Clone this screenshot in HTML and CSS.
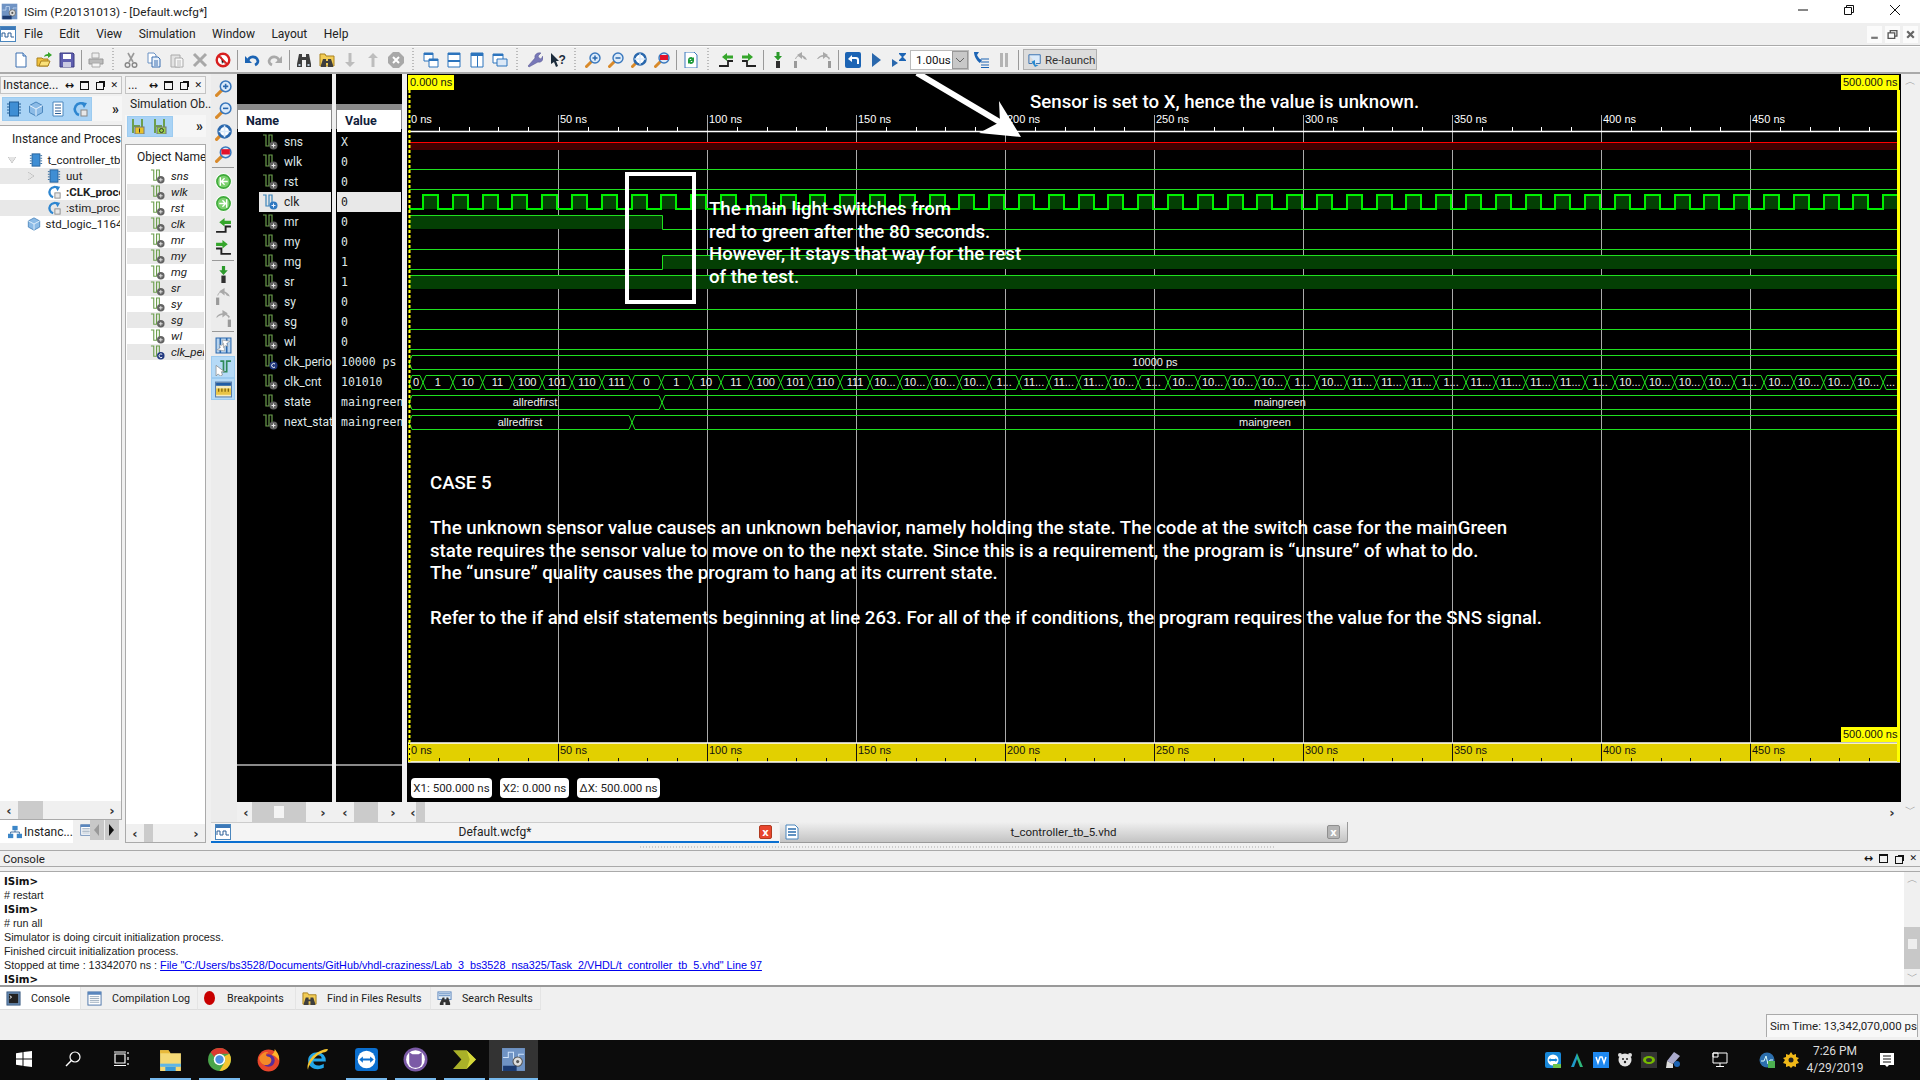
FILE: index.html
```html
<!DOCTYPE html>
<html lang="en">
<head>
<meta charset="utf-8">
<title>ISim (P.20131013) - [Default.wcfg*]</title>
<link rel="stylesheet" href="styles.css">
</head>
<body>
<svg class="defs" width="0" height="0">
  <defs>
    <symbol id="i-new" viewBox="0 0 16 16"><path d="M3 1h7l3 3v11H3z" fill="#fff" stroke="#3a6fb0"/><path d="M10 1v3h3" fill="#cfe0f4" stroke="#3a6fb0"/></symbol>
    <symbol id="i-open" viewBox="0 0 16 16"><path d="M1 6h5l1 1h5v7H1z" fill="#f2c23c" stroke="#a8801e"/><path d="M3 14l2-5h9l-2 5z" fill="#fbe27a" stroke="#a8801e"/><path d="M8 5c0-2 2-3 4-3V0l4 3-4 3V4c-2 0-3 0-4 1z" fill="#3aa52c"/></symbol>
    <symbol id="i-save" viewBox="0 0 16 16"><path d="M1 1h13l1 1v13H1z" fill="#5f5fb0" stroke="#3c3c80"/><rect x="4" y="2" width="8" height="5" fill="#fff"/><rect x="4" y="10" width="8" height="5" fill="#c9c9e2"/></symbol>
    <symbol id="i-print" viewBox="0 0 16 16"><path d="M4 1h7v5H4z" fill="#eee" stroke="#aaa"/><path d="M1 7h14v5H1z" fill="#bbb" stroke="#999"/><path d="M4 11h8v4H4z" fill="#f4f4f4" stroke="#aaa"/></symbol>
    <symbol id="i-cut" viewBox="0 0 16 16"><path d="M5 1l5 9M11 1L6 10" stroke="#999" stroke-width="1.6" fill="none"/><circle cx="4.5" cy="13" r="2.3" fill="none" stroke="#888" stroke-width="1.4"/><circle cx="11.5" cy="13" r="2.3" fill="none" stroke="#888" stroke-width="1.4"/></symbol>
    <symbol id="i-copy" viewBox="0 0 16 16"><path d="M2 1h6l2 2v8H2z" fill="#fff" stroke="#6b92c4"/><path d="M6 5h6l2 2v8H6z" fill="#eaf2fb" stroke="#3a6fb0"/><path d="M8 9h4M8 11h4M8 13h4" stroke="#3a6fb0"/></symbol>
    <symbol id="i-paste" viewBox="0 0 16 16"><path d="M2 3h9v12H2z" fill="#e3e3e3" stroke="#aaa"/><path d="M6 6h7l1 1v8H6z" fill="#f7f7f7" stroke="#aaa"/><path d="M8 9h4M8 11h4M8 13h4" stroke="#bbb"/></symbol>
    <symbol id="i-del" viewBox="0 0 16 16"><path d="M2 2l12 12M14 2L2 14" stroke="#a8a8a8" stroke-width="3"/></symbol>
    <symbol id="i-stop" viewBox="0 0 16 16"><circle cx="8" cy="8" r="6.3" fill="#fff" stroke="#d81f1f" stroke-width="2.4"/><path d="M6 4l4 8-2-2-1 2z" fill="#111"/><path d="M3.6 3.6l8.8 8.8" stroke="#d81f1f" stroke-width="2"/></symbol>
    <symbol id="i-undo" viewBox="0 0 16 16"><path d="M4 9c1-5 8-6 10 0 0 2-1 3-3 4" fill="none" stroke="#1c64b4" stroke-width="2.6"/><path d="M1 4v7h7z" fill="#1c64b4"/></symbol>
    <symbol id="i-redo" viewBox="0 0 16 16"><path d="M12 9C11 4 4 3 2 9c0 2 1 3 3 4" fill="none" stroke="#a9a9a9" stroke-width="2.6"/><path d="M15 4v7H8z" fill="#a9a9a9"/></symbol>
    <symbol id="i-bino" viewBox="0 0 16 16"><path d="M3 2h3v3h4V2h3l2 10v3H10V8H6v7H1v-3z" fill="#3e3e3e"/><path d="M2.5 12h2v2h-2zM11.500 12h2v2h-2z" fill="#bcd"/></symbol>
    <symbol id="i-findf" viewBox="0 0 16 16"><path d="M1 2h5l1 2h8v10H1z" fill="#f2cc55" stroke="#a8801e"/><path d="M4 7h3v2h2V7h3l2 6v2H9v-4H7v4H2v-2z" fill="#3e3e3e"/></symbol>
    <symbol id="i-down" viewBox="0 0 16 16"><path d="M6.500 1h3v9H13l-5 5-5-5h3.500z" fill="#bdbdbd"/></symbol>
    <symbol id="i-up" viewBox="0 0 16 16"><path d="M6.500 15h3V6H13L8 1 3 6h3.500z" fill="#bdbdbd"/></symbol>
    <symbol id="i-xc" viewBox="0 0 16 16"><path d="M5 0h6l5 5v6l-5 5H5l-5-5V5z" fill="#a8a8a8"/><path d="M5 5l6 6M11 5l-6 6" stroke="#fff" stroke-width="2"/></symbol>
    <symbol id="i-w1" viewBox="0 0 16 16"><path d="M1 1h9v8H1z" fill="#fff" stroke="#2c74bd"/><path d="M1 1h9v2H1z" fill="#2c74bd"/><path d="M6 7h9v8H6z" fill="#fff" stroke="#2c74bd"/><path d="M6 7h9v2H6z" fill="#2c74bd"/></symbol>
    <symbol id="i-w2" viewBox="0 0 16 16"><path d="M2 1h12v14H2z" fill="#fff" stroke="#2c74bd"/><path d="M2 1h12v2H2zM2 8h12v2H2z" fill="#2c74bd"/></symbol>
    <symbol id="i-w3" viewBox="0 0 16 16"><path d="M2 1h12v14H2z" fill="#fff" stroke="#2c74bd"/><path d="M2 1h12v3H2zM8 4h1v11H8z" fill="#2c74bd"/></symbol>
    <symbol id="i-w4" viewBox="0 0 16 16"><path d="M1 2h10v9H1z" fill="#fff" stroke="#2c74bd"/><path d="M1 2h10v2H1z" fill="#2c74bd"/><path d="M5 7h10v7H5z" fill="#dce9f7" stroke="#2c74bd"/></symbol>
    <symbol id="i-wrench" viewBox="0 0 16 16"><path d="M2 15l-1-1 7-8c-1-3 2-6 6-5l-3 3 1 2 2 1 2-3c1 4-2 7-5 6z" fill="#7878b8" stroke="#54548f" stroke-width=".5"/></symbol>
    <symbol id="i-help" viewBox="0 0 16 16"><path d="M1 1v11l3-2 2 5 2-1-2-5h3z" fill="#1c2c3c"/><text x="8.500" y="12" class="q">?</text></symbol>
    <symbol id="i-zi" viewBox="0 0 16 16"><path d="M1.500 14.500l5-5" stroke="#d98a2a" stroke-width="3" stroke-linecap="round"/><circle cx="10" cy="6" r="5" fill="#dcebfa" stroke="#3a78bd" stroke-width="1.400"/><path d="M7.500 6h5M10 3.500v5" stroke="#2a68ad" stroke-width="1.500"/></symbol>
    <symbol id="i-zo" viewBox="0 0 16 16"><path d="M1.500 14.500l5-5" stroke="#d98a2a" stroke-width="3" stroke-linecap="round"/><circle cx="10" cy="6" r="5" fill="#dcebfa" stroke="#3a78bd" stroke-width="1.400"/><path d="M7.500 6h5" stroke="#2a68ad" stroke-width="1.500"/></symbol>
    <symbol id="i-zf" viewBox="0 0 16 16"><path d="M1.500 14.500l3-3" stroke="#d98a2a" stroke-width="3" stroke-linecap="round"/><circle cx="9" cy="7" r="5.500" fill="#fff" stroke="#2a68ad" stroke-width="2.600"/><path d="M9 1.500v11M3.500 7h11" stroke="#dcebfa" stroke-width="1.500"/></symbol>
    <symbol id="i-zr" viewBox="0 0 16 16"><path d="M1.500 14.500l5-5" stroke="#d98a2a" stroke-width="3" stroke-linecap="round"/><circle cx="10" cy="6" r="5" fill="#dcebfa" stroke="#3a78bd" stroke-width="1.400"/><rect x="6" y="3" width="8" height="5" fill="#e3122a"/></symbol>
    <symbol id="i-rdoc" viewBox="0 0 16 16"><path d="M2 0h9l3 3v13H2z" fill="#fff" stroke="#3a78bd"/><path d="M5 8c0-3 4-4 5-2l1-1v4H7l1.500-1.500C7.500 6.500 6.500 7 6.500 8.500zM11 9c0 3-4 4-5 2l-1 1V8h4l-1.500 1.500c1 1 2 .5 2-1z" fill="#1f9a3a"/></symbol>
    <symbol id="i-sl" viewBox="0 0 16 16"><path d="M1 14h9V9h5" fill="none" stroke="#222" stroke-width="1.800"/><path d="M4 5l5-4v2.500h6v3H9V9z" fill="#35a62b"/></symbol>
    <symbol id="i-sr" viewBox="0 0 16 16"><path d="M1 14h9V9h5" fill="none" stroke="#222" stroke-width="1.800" transform="translate(16 0) scale(-1 1)"/><path d="M12 5L7 1v2.500H1v3h6V9z" fill="#35a62b"/></symbol>
    <symbol id="i-stepin" viewBox="0 0 16 16"><path d="M6.500 0h3v4H12L8 8.500 4 4h2.500z" fill="#2b9a2b"/><rect x="6" y="9" width="4" height="7" fill="#2f2f2f"/></symbol>
    <symbol id="i-stepov" viewBox="0 0 16 16"><rect x="1" y="9" width="3" height="7" fill="#9a9a9a"/><path d="M3 7c1-4 6-4 8 0l3 1c-2-6-10-7-12-1z" fill="#a9a9a9"/><path d="M9 0L4 3l5 4z" fill="#a9a9a9"/></symbol>
    <symbol id="i-stepout" viewBox="0 0 16 16"><rect x="12" y="9" width="3" height="7" fill="#9a9a9a"/><path d="M13 8c-1-4-7-5-11-1L1 7c3-5 9-5 13-1z" fill="#a9a9a9"/><path d="M7 0l5 3-5 4z" fill="#a9a9a9"/></symbol>
    <symbol id="i-back" viewBox="0 0 16 16"><rect width="16" height="16" rx="2" fill="#1c64b4"/><path d="M3 7l4-4v2h4c2 0 3 1 3 3v4h-2V8c0-1-1-1-2-1H7v3z" fill="#fff"/></symbol>
    <symbol id="i-play" viewBox="0 0 16 16"><path d="M4 1l9 7-9 7z" fill="#2a68ad"/></symbol>
    <symbol id="i-runt" viewBox="0 0 16 16"><path d="M1 7l6 4-6 4z" fill="#2a68ad"/><path d="M8 1h7v1l-3 3 3 3v1H8V8l3-3-3-3z" fill="#1c64b4"/></symbol>
    <symbol id="i-stepb" viewBox="0 0 16 16"><path d="M1 0h5L4 3c2 4 3 4 5 5L7 11C5 10 1 5 1 0z" fill="#1c64b4"/><path d="M8 7h8M8 10h8M8 13h8M8 15.500h8" stroke="#1c64b4"/></symbol>
    <symbol id="i-pause" viewBox="0 0 16 16"><path d="M4 1h3v14H4zM9 1h3v14H9z" fill="#b4b4b4"/></symbol>
    <symbol id="i-rl" viewBox="0 0 16 16"><path d="M1 2h13v10H9" fill="#dcebfa" stroke="#2a68ad"/><path d="M1 2v10h4" fill="none" stroke="#2a68ad"/><path d="M4 10l4-2v5l4 1-4 2z" fill="#2a8ad0"/></symbol>
    <symbol id="i-sig" viewBox="0 0 16 16"><path d="M1 1h3v11h3V1h3v8" fill="none" stroke="#6d9f4e" stroke-width="1.200"/><circle cx="11.500" cy="11.500" r="4" fill="#636363"/><path d="M9.500 11.500h4M11.500 9.500v4" stroke="#e8e8e8"/></symbol>
    <symbol id="i-sigb" viewBox="0 0 16 16"><path d="M1 1h3v11h3V1h3v8" fill="none" stroke="#3a82b8" stroke-width="1.200"/><circle cx="11.500" cy="11.500" r="4" fill="#2e78c0"/><path d="M9.500 11.500h4M11.500 9.500v4" stroke="#e8f0ff"/></symbol>
    <symbol id="i-sigc" viewBox="0 0 16 16"><path d="M1 1h3v11h3V1h3v8" fill="none" stroke="#6d9f4e" stroke-width="1.200"/><circle cx="11.500" cy="11.500" r="4" fill="#21387f"/><path d="M13 10a2 2 0 1 0 0 3" fill="none" stroke="#fff"/></symbol>
    <symbol id="i-chip" viewBox="0 0 16 16"><rect x="3.500" y="1" width="9" height="14" fill="#3f8ed4" stroke="#225f98"/><path d="M1 3h2M1 6h2M1 9h2M1 12h2M13 3h2M13 6h2M13 9h2M13 12h2" stroke="#225f98"/></symbol>
    <symbol id="i-cube" viewBox="0 0 16 16"><path d="M8 1l6.500 3.500v7L8 15l-6.500-3.500v-7z" fill="#8cbbe6" stroke="#4a86bd"/><path d="M1.500 4.500L8 8l6.500-3.500M8 8v7" stroke="#e8f3fd" fill="none"/></symbol>
    <symbol id="i-list" viewBox="0 0 16 16"><path d="M3 1h10v14H3z" fill="#fff" stroke="#4a86bd"/><path d="M5 4h6M5 7h6M5 10h6M5 12.500h6" stroke="#2c5f96"/></symbol>
    <symbol id="i-proc" viewBox="0 0 16 16"><path d="M13 4A6 6 0 1 0 7 14" fill="none" stroke="#2e86d0" stroke-width="2.600"/><path d="M9 1l6 1-3 5z" fill="#2e86d0"/><rect x="9" y="9" width="6" height="6" fill="#e8e8e8" stroke="#888"/></symbol>
    <symbol id="i-fi" viewBox="0 0 16 16"><path d="M1 1h2v14H1zM3 7h6v8H7V9H3z" fill="#6d9f4e"/><path d="M10 1h2v9h-2z" fill="#6d9f4e"/><rect x="4" y="9" width="9" height="7" fill="#e8c22c" stroke="#777"/><path d="M8.500 10.500v4" stroke="#333"/></symbol>
    <symbol id="i-fo" viewBox="0 0 16 16"><path d="M1 1h2v14H1zM3 7h6v8H7V9H3z" fill="#6d9f4e"/><path d="M10 1h2v9h-2z" fill="#6d9f4e"/><rect x="4" y="9" width="9" height="7" fill="#99d24a" stroke="#777"/><circle cx="8.500" cy="12.500" r="2" fill="none" stroke="#333"/></symbol>
    <symbol id="i-gl" viewBox="0 0 16 16"><circle cx="8" cy="8" r="7.500" fill="#3eaa3a" stroke="#fff"/><circle cx="8" cy="8" r="5.500" fill="#7cd06f"/><path d="M5 4v8M12 8H6l3-3M6 8l3 3" fill="none" stroke="#fff" stroke-width="1.300"/></symbol>
    <symbol id="i-gr" viewBox="0 0 16 16"><circle cx="8" cy="8" r="7.500" fill="#3eaa3a" stroke="#fff"/><circle cx="8" cy="8" r="5.500" fill="#7cd06f"/><path d="M11 4v8M4 8h6L7 5M10 8l-3 3" fill="none" stroke="#fff" stroke-width="1.300"/></symbol>
    <symbol id="i-swap" viewBox="0 0 16 16"><path d="M1 1h14v14H1z" fill="#b7d3ee" stroke="#2a68ad"/><path d="M5 1v14M11 1v14" stroke="#2a68ad" stroke-width="1.500"/><path d="M7 3l7 1-3 2 1 3-2-1-2 2zM9 13L2 12l3-2-1-3 2 1 2-2z" fill="#fff" stroke="#888" stroke-width=".5"/></symbol>
    <symbol id="i-cur" viewBox="0 0 16 16"><path d="M5 2h3v10h3V2h4" fill="none" stroke="#2f8a5b" stroke-width="1.600"/><path d="M1 6v10l2-2 2 2 2-1-1-3h3z" fill="#fff" stroke="#777" stroke-width=".6"/></symbol>
    <symbol id="i-ruler" viewBox="0 0 16 16"><rect x=".5" y="1" width="15" height="14" fill="#f6ecc0" stroke="#5a7fae"/><rect x="1" y="1.500" width="14" height="3" fill="#1f5ca5"/><rect x="1" y="7" width="14" height="6" fill="#e9c445"/><path d="M3.500 7v3M6.500 7v3M9.500 7v3M12.500 7v3" stroke="#6b5200"/></symbol>
    <symbol id="i-tree" viewBox="0 0 16 16"><rect x="5" y="1" width="6" height="5" fill="#3c86c8"/><rect x="0" y="10" width="6" height="5" fill="#3c86c8"/><rect x="10" y="10" width="6" height="5" fill="#3c86c8"/><path d="M8 6v2H3v2M8 8h5v2" fill="none" stroke="#2c5f96"/></symbol>
    <symbol id="i-wave" viewBox="0 0 16 16"><rect x=".5" y=".5" width="15" height="15" fill="#fff" stroke="#4a86bd"/><rect x="1" y="1" width="14" height="3" fill="#3c78b8"/><path d="M2 11V7h3v4h3V7h3v4h3" fill="none" stroke="#2c5f96"/></symbol>
    <symbol id="i-docv" viewBox="0 0 16 16"><path d="M2 1h9l3 3v11H2z" fill="#fff" stroke="#4a86bd"/><path d="M4 5h8M4 8h8M4 11h8" stroke="#2c6fae" stroke-width="1.500"/></symbol>
    <symbol id="i-grid" viewBox="0 0 16 16"><rect x="1" y="1" width="14" height="14" fill="#fff" stroke="#4a72a8"/><rect x="1" y="1" width="14" height="3" fill="#5a86bd"/><path d="M3 6h10M3 8h10M3 10h10M3 12h10" stroke="#9ab"/></symbol>
    <symbol id="i-term" viewBox="0 0 16 16"><rect x="1" y="1" width="14" height="14" fill="#6b8fb8" stroke="#3a5a80"/><rect x="3" y="3" width="10" height="10" fill="#222"/><path d="M4 5l2 1.500L4 8" stroke="#fff" fill="none"/></symbol>
    <symbol id="i-srch" viewBox="0 0 16 16"><rect x="1" y="1" width="14" height="8" fill="#e4eef8" stroke="#5a86bd"/><path d="M2 3h12M2 5h12" stroke="#5a86bd"/><path d="M6 7h2v2h2V7h2l2 6v2H9v-3H7v3H3v-2z" fill="#333"/></symbol>
    <symbol id="t-win" viewBox="0 0 16 16"><path d="M0 2.200L6.500 1.300v6.200H0zM7.500 1.100L16 0v7.500H7.500zM0 8.500h6.500v6.200L0 13.800zM7.500 8.500H16V16l-8.500-1.100z" fill="#fff"/></symbol>
    <symbol id="t-search" viewBox="0 0 16 16"><circle cx="10" cy="6" r="5" fill="none" stroke="#fff" stroke-width="1.200"/><path d="M6.400 9.600L1 15" stroke="#fff" stroke-width="1.400"/></symbol>
    <symbol id="t-view" viewBox="0 0 16 16"><path d="M1 3h10v9H1zM0 1h12M0 14.500h12M14 1v2M14 6v3M14 12v2" fill="none" stroke="#fff" stroke-width="1.200"/></symbol>
    <symbol id="t-folder" viewBox="0 0 24 24"><path d="M2 3h8l2 3h10v17H2z" fill="#f5d976"/><path d="M2 3h8l2 3H2z" fill="#e8b93a"/><path d="M7 19h10v4H7z" fill="#3a9bd8"/><path d="M2 16h20v3H2z" fill="#5fb6e6"/></symbol>
    <symbol id="t-chrome" viewBox="0 0 24 24"><circle cx="12" cy="12" r="11" fill="#4aa54a"/><path d="M12 1a11 11 0 0 1 9.500 5.500H12a5.500 5.500 0 0 0-5 3L3.500 5A11 11 0 0 1 12 1z" fill="#db3a2f"/><path d="M21.500 6.500A11 11 0 0 1 12 23l4.800-8.200A5.500 5.500 0 0 0 16.500 9z" fill="#f4c430"/><circle cx="12" cy="12" r="5.500" fill="#fff"/><circle cx="12" cy="12" r="4" fill="#4a8fe0"/></symbol>
    <symbol id="t-ff" viewBox="0 0 24 24"><circle cx="12" cy="13" r="10.500" fill="#e8462c"/><path d="M18 2c3 4 5 7 4 11-2-3-4-5-7-5 2-2 3-4 3-6z" fill="#ffb52c"/><circle cx="12" cy="13" r="6" fill="#5a2d9a"/><path d="M3 10c2-4 6-6 9-5-3 1-3 3-1 4 3 0 5 3 3 6-2 3-7 3-9 0-1-1-2-3-2-5z" fill="#f48a28"/></symbol>
    <symbol id="t-ie" viewBox="0 0 24 24"><path d="M12 5a8 8 0 0 1 8 9H8c0 4 6 5 10 2v4c-6 3-15 1-15-7 0-5 4-8 9-8zm-4 6h8c0-4-7-4-8 0z" fill="#23a6e8"/><path d="M3 22C0 15 10 3 21 2c3 0-1 3-2 3-9 1-16 13-16 17z" fill="#f4c430"/></symbol>
    <symbol id="t-tv" viewBox="0 0 24 24"><rect x="1" y="1" width="22" height="22" rx="3" fill="#0b6fcf"/><circle cx="12" cy="12" r="8.500" fill="#fff"/><path d="M5 12l3.500-3v2h7V9l3.500 3-3.500 3v-2h-7v2z" fill="#0b6fcf"/></symbol>
    <symbol id="t-cat" viewBox="0 0 24 24"><circle cx="12" cy="12" r="11.500" fill="#7b5aa6"/><circle cx="12" cy="12" r="9" fill="#fff"/><path d="M6 5l3 2h6l3-2v10c0 3-3 5-6 5s-6-2-6-5z" fill="#7b5aa6"/></symbol>
    <symbol id="t-xil" viewBox="0 0 24 24"><path d="M1 3h13l9 9-9 9H1l8-9z" fill="#a9b028"/><path d="M14 3l9 9-9 9 3-9z" fill="#d5d83a"/></symbol>
    <symbol id="t-isim" viewBox="0 0 24 24"><rect x="1" y="1" width="22" height="22" fill="#6f93c4"/><path d="M2 10h5V5h5v6h5V7h5" fill="none" stroke="#cfe3fa"/><circle cx="16" cy="14" r="4.500" fill="#ddd" stroke="#555"/><circle cx="16" cy="14" r="1.500" fill="#555"/><rect x="2" y="18" width="13" height="5" fill="#1b3a70"/></symbol>
    <symbol id="s-tv" viewBox="0 0 16 16"><rect width="16" height="16" rx="2" fill="#1787d8"/><circle cx="8" cy="8" r="5.500" fill="#fff"/><path d="M3.500 8l2-2v1h5V6l2 2-2 2V9h-5v1z" fill="#1787d8"/><rect x="8" y="12" width="8" height="4" fill="#6cc24a"/></symbol>
    <symbol id="s-ad" viewBox="0 0 16 16"><path d="M8 1L2 15h3l3-8z" fill="#1f9ac9"/><path d="M8 1l6 14h-3L8 7z" fill="#2fb67c"/></symbol>
    <symbol id="s-wv" viewBox="0 0 16 16"><rect width="16" height="16" fill="#1e88f0"/><path d="M3 5l2 6 2-6h2l2 6 2-6" fill="none" stroke="#fff" stroke-width="1.400"/></symbol>
    <symbol id="s-bear" viewBox="0 0 16 16"><circle cx="3" cy="3" r="2" fill="#ddd"/><circle cx="13" cy="3" r="2" fill="#ddd"/><ellipse cx="8" cy="8" rx="6.500" ry="6.500" fill="#e4e4e4"/><circle cx="6" cy="7" r="1" fill="#222"/><circle cx="10" cy="7" r="1" fill="#222"/><circle cx="8" cy="10" r="1.200" fill="#222"/></symbol>
    <symbol id="s-nv" viewBox="0 0 16 16"><rect width="16" height="16" fill="#333"/><ellipse cx="8" cy="8" rx="6" ry="4" fill="#76b900"/><ellipse cx="8" cy="8" rx="3" ry="2" fill="#333"/></symbol>
    <symbol id="s-usb" viewBox="0 0 16 16"><path d="M9 0l6 4-7 8-6-3z" fill="#aac"/><path d="M2 9l6 3v4H1z" fill="#ddd"/><circle cx="12" cy="12" r="3" fill="#1c64b4"/></symbol>
    <symbol id="s-net" viewBox="0 0 16 16"><path d="M1 1h14v10H1zM8 11v3M4 14.500h8" fill="none" stroke="#fff"/><path d="M1 1h5v4H1z" fill="none" stroke="#fff"/></symbol>
    <symbol id="s-pulse" viewBox="0 0 16 16"><circle cx="8" cy="8" r="7.500" fill="#2c6fae"/><path d="M2 9h3l2-5 2 8 2-4h3" fill="none" stroke="#dff" /><rect x="9" y="9" width="7" height="7" fill="#4caf50"/></symbol>
    <symbol id="s-gear" viewBox="0 0 16 16"><path d="M8 0l2 3 3-1 0 3 3 1-2 2 2 3-3 1 0 3-3-1-2 2-2-2-3 1 0-3-3-1 2-3-2-2 3-1 0-3 3 1z" fill="#f0b818"/><circle cx="8" cy="8" r="2.500" fill="#222"/></symbol>
    <symbol id="s-note" viewBox="0 0 16 16"><path d="M1 1h14v12h-5l-2 2-2-2H1z" fill="#fff"/><path d="M4 4h8M4 7h8M4 10h8" stroke="#111"/></symbol>
  </defs>
</svg>

<div class="app">
  <header class="titlebar">
    <svg class="title-icon"><use href="#t-isim"/></svg>
    <span class="title-text">ISim (P.20131013) - [Default.wcfg*]</span>
    <div class="winctl">
      <span class="winbtn"><svg viewBox="0 0 10 10"><path d="M0 5h10" stroke="#111"/></svg></span>
      <span class="winbtn"><svg viewBox="0 0 10 10"><path d="M.5 2.500h7v7h-7zM2.500 2.500v-2h7v7h-2" fill="none" stroke="#111"/></svg></span>
      <span class="winbtn"><svg viewBox="0 0 10 10"><path d="M0 0l10 10M10 0L0 10" stroke="#111"/></svg></span>
    </div>
  </header>

  <nav class="menubar">
    <svg class="menu-icon"><use href="#i-wave"/></svg>
    <span class="menu-item">File</span>
    <span class="menu-item">Edit</span>
    <span class="menu-item">View</span>
    <span class="menu-item">Simulation</span>
    <span class="menu-item">Window</span>
    <span class="menu-item">Layout</span>
    <span class="menu-item">Help</span>
    <div class="mdictl">
      <span class="mdibtn"><svg viewBox="0 0 10 10"><path d="M2 8h6" stroke="#777" stroke-width="2"/></svg></span>
      <span class="mdibtn"><svg viewBox="0 0 10 10"><path d="M1 3.500h6v5H1zM3 3.500v-2h6v5H7" fill="none" stroke="#555" stroke-width="1.200"/></svg></span>
      <span class="mdibtn"><svg viewBox="0 0 10 10"><path d="M2 2l6 6M8 2L2 8" stroke="#666" stroke-width="2"/></svg></span>
    </div>
  </nav>

  <div class="toolbar">
    <svg class="tb"><use href="#i-new"/></svg><svg class="tb"><use href="#i-open"/></svg><svg class="tb"><use href="#i-save"/></svg>
    <i class="sep"></i>
    <svg class="tb"><use href="#i-print"/></svg>
    <i class="grip"></i>
    <svg class="tb"><use href="#i-cut"/></svg><svg class="tb"><use href="#i-copy"/></svg><svg class="tb"><use href="#i-paste"/></svg><svg class="tb"><use href="#i-del"/></svg><svg class="tb"><use href="#i-stop"/></svg>
    <i class="sep"></i>
    <svg class="tb"><use href="#i-undo"/></svg><svg class="tb"><use href="#i-redo"/></svg>
    <i class="sep"></i>
    <svg class="tb"><use href="#i-bino"/></svg><svg class="tb"><use href="#i-findf"/></svg><svg class="tb"><use href="#i-down"/></svg><svg class="tb"><use href="#i-up"/></svg><svg class="tb"><use href="#i-xc"/></svg>
    <i class="grip"></i>
    <svg class="tb"><use href="#i-w1"/></svg><svg class="tb"><use href="#i-w2"/></svg><svg class="tb"><use href="#i-w3"/></svg><svg class="tb"><use href="#i-w4"/></svg>
    <i class="grip"></i>
    <svg class="tb"><use href="#i-wrench"/></svg><svg class="tb"><use href="#i-help"/></svg>
    <i class="grip"></i>
    <svg class="tb"><use href="#i-zi"/></svg><svg class="tb"><use href="#i-zo"/></svg><svg class="tb"><use href="#i-zf"/></svg><svg class="tb"><use href="#i-zr"/></svg>
    <i class="sep"></i>
    <svg class="tb"><use href="#i-rdoc"/></svg>
    <i class="grip"></i>
    <svg class="tb"><use href="#i-sl"/></svg><svg class="tb"><use href="#i-sr"/></svg>
    <i class="sep"></i>
    <svg class="tb"><use href="#i-stepin"/></svg><svg class="tb"><use href="#i-stepov"/></svg><svg class="tb"><use href="#i-stepout"/></svg>
    <i class="sep"></i>
    <svg class="tb"><use href="#i-back"/></svg><svg class="tb"><use href="#i-play"/></svg><svg class="tb"><use href="#i-runt"/></svg>
    <div class="combo"><span class="combo-val">1.00us</span><span class="combo-btn"><svg viewBox="0 0 10 6"><path d="M1 1l4 4 4-4" fill="none" stroke="#666"/></svg></span></div>
    <svg class="tb"><use href="#i-stepb"/></svg><svg class="tb"><use href="#i-pause"/></svg>
    <i class="sep"></i>
    <div class="relaunch"><svg class="rl-ic"><use href="#i-rl"/></svg><span>Re-launch</span></div>
  </div>

  <main class="workspace">
    <section class="col-inst">
      <div class="dock-head">
        <span class="dock-title">Instance...</span>
        <span class="dock-ctl"><b>↔</b><i class="c-max"></i><i class="c-rest"></i><b class="c-x">✕</b></span>
      </div>
      <div class="mini-tools">
        <span class="hl-group"><svg><use href="#i-chip"/></svg><svg><use href="#i-cube"/></svg><svg><use href="#i-list"/></svg><svg><use href="#i-proc"/></svg></span>
        <span class="chev">»</span>
      </div>
      <div class="tree-box">
        <div class="tree-head">Instance and Process Name</div>
        <div class="tree-row lvl0"><span class="tri open"></span><svg><use href="#i-chip"/></svg><span>t_controller_tb</span></div>
        <div class="tree-row lvl1 alt"><span class="tri"></span><svg><use href="#i-chip"/></svg><span>uut</span></div>
        <div class="tree-row lvl1 strong"><span class="tri none"></span><svg><use href="#i-proc"/></svg><span>:CLK_process</span></div>
        <div class="tree-row lvl1 alt"><span class="tri none"></span><svg><use href="#i-proc"/></svg><span>:stim_process</span></div>
        <div class="tree-row lvl0"><span class="tri none"></span><svg><use href="#i-cube"/></svg><span>std_logic_1164</span></div>
        <div class="spacer"></div>
        <div class="hscroll"><span class="arr">‹</span><span class="thumb t-inst"></span><span class="arr end">›</span></div>
      </div>
      <div class="dock-tabs">
        <span class="dtab on"><svg><use href="#i-tree"/></svg>Instanc...</span>
        <svg class="dtab-ic"><use href="#i-grid"/></svg>
        <span class="dtab-nav"><i class="tl"></i></span><span class="dtab-nav"><i class="tr"></i></span>
      </div>
    </section>

    <section class="col-obj">
      <div class="dock-head">
        <span class="dock-title">...</span>
        <span class="dock-ctl"><b>↔</b><i class="c-max"></i><i class="c-rest"></i><b class="c-x">✕</b></span>
      </div>
      <div class="obj-title">Simulation Ob...</div>
      <div class="mini-tools obj-tools">
        <span class="hl-group"><svg><use href="#i-fi"/></svg><svg><use href="#i-fo"/></svg></span>
        <span class="chev">»</span>
      </div>
      <div class="obj-box">
        <div class="obj-head">Object Name</div>
        <div class="obj-row"><svg><use href="#i-sig"/></svg><span>sns</span></div>
        <div class="obj-row alt"><svg><use href="#i-sig"/></svg><span>wlk</span></div>
        <div class="obj-row"><svg><use href="#i-sig"/></svg><span>rst</span></div>
        <div class="obj-row alt"><svg><use href="#i-sig"/></svg><span>clk</span></div>
        <div class="obj-row"><svg><use href="#i-sig"/></svg><span>mr</span></div>
        <div class="obj-row alt"><svg><use href="#i-sig"/></svg><span>my</span></div>
        <div class="obj-row"><svg><use href="#i-sig"/></svg><span>mg</span></div>
        <div class="obj-row alt"><svg><use href="#i-sig"/></svg><span>sr</span></div>
        <div class="obj-row"><svg><use href="#i-sig"/></svg><span>sy</span></div>
        <div class="obj-row alt"><svg><use href="#i-sig"/></svg><span>sg</span></div>
        <div class="obj-row"><svg><use href="#i-sig"/></svg><span>wl</span></div>
        <div class="obj-row alt"><svg><use href="#i-sigc"/></svg><span>clk_period</span></div>
        <div class="spacer"></div>
        <div class="hscroll"><span class="arr">‹</span><span class="thumb t-obj"></span><span class="arr end">›</span></div>
      </div>
    </section>

    <section class="col-doc">
      <div class="doc-main">
        <aside class="side-tools">
          <svg class="st"><use href="#i-zi"/></svg><svg class="st"><use href="#i-zo"/></svg><svg class="st"><use href="#i-zf"/></svg><svg class="st"><use href="#i-zr"/></svg>
          <i class="st-sep"></i>
          <svg class="st"><use href="#i-gl"/></svg><svg class="st"><use href="#i-gr"/></svg><svg class="st"><use href="#i-sl"/></svg><svg class="st"><use href="#i-sr"/></svg>
          <i class="st-sep"></i>
          <svg class="st"><use href="#i-stepin"/></svg><svg class="st"><use href="#i-stepov"/></svg><svg class="st"><use href="#i-stepout"/></svg>
          <i class="st-sep"></i>
          <svg class="st"><use href="#i-swap"/></svg>
          <span class="st-on"><svg class="st"><use href="#i-cur"/></svg></span>
          <span class="st-on"><svg class="st"><use href="#i-ruler"/></svg></span>
        </aside>

        <div class="sig-col names">
          <div class="sig-black">
            <div class="sig-top"></div>
            <div class="sig-head">Name</div>
            <div class="sig-row"><svg><use href="#i-sig"/></svg><span>sns</span></div>
            <div class="sig-row"><svg><use href="#i-sig"/></svg><span>wlk</span></div>
            <div class="sig-row"><svg><use href="#i-sig"/></svg><span>rst</span></div>
            <div class="sig-row sel"><svg><use href="#i-sigb"/></svg><span>clk</span></div>
            <div class="sig-row"><svg><use href="#i-sig"/></svg><span>mr</span></div>
            <div class="sig-row"><svg><use href="#i-sig"/></svg><span>my</span></div>
            <div class="sig-row"><svg><use href="#i-sig"/></svg><span>mg</span></div>
            <div class="sig-row"><svg><use href="#i-sig"/></svg><span>sr</span></div>
            <div class="sig-row"><svg><use href="#i-sig"/></svg><span>sy</span></div>
            <div class="sig-row"><svg><use href="#i-sig"/></svg><span>sg</span></div>
            <div class="sig-row"><svg><use href="#i-sig"/></svg><span>wl</span></div>
            <div class="sig-row"><svg><use href="#i-sigc"/></svg><span>clk_period</span></div>
            <div class="sig-row"><svg><use href="#i-sig"/></svg><span>clk_cnt</span></div>
            <div class="sig-row"><svg><use href="#i-sig"/></svg><span>state</span></div>
            <div class="sig-row"><svg><use href="#i-sig"/></svg><span>next_state</span></div>
            <div class="spacer"></div>
            <div class="sig-foot"></div>
          </div>
          <div class="hscroll dark-free"><span class="arr">‹</span><span class="thumb t-names"><i></i></span><span class="arr end">›</span></div>
        </div>

        <div class="sig-col values">
          <div class="sig-black">
            <div class="sig-top"></div>
            <div class="sig-head val">Value</div>
            <div class="val-row">X</div>
            <div class="val-row">0</div>
            <div class="val-row">0</div>
            <div class="val-row sel">0</div>
            <div class="val-row">0</div>
            <div class="val-row">0</div>
            <div class="val-row">1</div>
            <div class="val-row">1</div>
            <div class="val-row">0</div>
            <div class="val-row">0</div>
            <div class="val-row">0</div>
            <div class="val-row">10000 ps</div>
            <div class="val-row">101010</div>
            <div class="val-row">maingreen</div>
            <div class="val-row">maingreen</div>
            <div class="spacer"></div>
            <div class="sig-foot"></div>
          </div>
          <div class="hscroll dark-free"><span class="arr">‹</span><span class="thumb t-vals"></span><span class="arr end">›</span></div>
        </div>

        <div class="wave-col">
          <div class="wave">
            <svg id="wave-svg" class="wave-svg" viewBox="407 74 1494 728" width="1494" height="728"></svg>
            <div class="note n-sensor">Sensor is set to X, hence the value is unknown.</div>
            <svg class="callout" viewBox="407 74 1494 728" width="1494" height="728">
              <path d="M917 73L1003 124" class="arrow-shaft"/>
              <path d="M999 101L1021 137 979 133 1000 122z" class="arrow-head"/>
            </svg>
            <div class="mark-box"></div>
            <div class="note n-main">The main light switches from<br>red to green after the 80 seconds.<br>However, it stays that way for the rest<br>of the test.</div>
            <div class="note n-case">CASE 5<br><br>The unknown sensor value causes an unknown behavior, namely holding the state. The code at the switch case for the mainGreen<br>state requires the sensor value to move on to the next state. Since this is a requirement, the program is “unsure” of what to do.<br>The “unsure” quality causes the program to hang at its current state.<br><br>Refer to the if and elsif statements beginning at line 263. For all of the if conditions, the program requires the value for the SNS signal.</div>
            <div class="pills"><span class="pill p1">X1: 500.000 ns</span><span class="pill p2">X2: 0.000 ns</span><span class="pill p3">ΔX: 500.000 ns</span></div>
          </div>
          <div class="hscroll wave-scroll"><span class="arr">‹</span><span class="thumb t-wave"></span><span class="arr end">›</span></div>
        </div>

        <div class="vscroll"><span class="arr-up">︿</span><span class="spacer"></span><span class="arr-dn">﹀</span></div>
      </div>

      <div class="doc-tabs">
        <div class="doc-tab active"><svg><use href="#i-wave"/></svg><span class="doc-label">Default.wcfg*</span><span class="close red">x</span></div>
        <div class="doc-tab other"><svg><use href="#i-docv"/></svg><span class="doc-label">t_controller_tb_5.vhd</span><span class="close gray">x</span></div>
      </div>
      <div class="gripper"></div>
    </section>
  </main>

  <section class="console">
    <div class="con-head"><span>Console</span><span class="con-ctl"><b>↔</b><i class="c-max"></i><i class="c-rest"></i><b class="c-x">✕</b></span></div>
    <div class="con-body">
      <div class="con-lines">
        <div class="prompt">ISim&gt;</div>
        <div># restart</div>
        <div class="prompt">ISim&gt;</div>
        <div># run all</div>
        <div>Simulator is doing circuit initialization process.</div>
        <div>Finished circuit initialization process.</div>
        <div>Stopped at time : 13342070 ns : <a class="link">File "C:/Users/bs3528/Documents/GitHub/vhdl-craziness/Lab_3_bs3528_nsa325/Task_2/VHDL/t_controller_tb_5.vhd" Line 97</a></div>
        <div class="prompt">ISim&gt;</div>
      </div>
      <div class="con-scroll"><span class="arr-up">︿</span><span class="spacer"></span><span class="con-thumb"><i></i></span><span class="arr-dn">﹀</span></div>
    </div>
    <div class="con-tabs">
      <span class="con-tab on"><svg><use href="#i-term"/></svg>Console</span>
      <span class="con-tab t2"><svg><use href="#i-grid"/></svg>Compilation Log</span>
      <span class="con-tab t3"><i class="bp"></i>Breakpoints</span>
      <span class="con-tab t4"><svg><use href="#i-findf"/></svg>Find in Files Results</span>
      <span class="con-tab t5"><svg><use href="#i-srch"/></svg>Search Results</span>
    </div>
  </section>

  <div class="status"><span class="simtime">Sim Time: 13,342,070,000 ps</span></div>

  <footer class="taskbar">
    <span class="tk k1"><svg class="sm"><use href="#t-win"/></svg></span>
    <span class="tk"><svg class="sm"><use href="#t-search"/></svg></span>
    <span class="tk"><svg class="sm"><use href="#t-view"/></svg></span>
    <span class="tk run"><svg><use href="#t-folder"/></svg></span>
    <span class="tk run"><svg><use href="#t-chrome"/></svg></span>
    <span class="tk"><svg><use href="#t-ff"/></svg></span>
    <span class="tk"><svg><use href="#t-ie"/></svg></span>
    <span class="tk run"><svg><use href="#t-tv"/></svg></span>
    <span class="tk run"><svg><use href="#t-cat"/></svg></span>
    <span class="tk run"><svg><use href="#t-xil"/></svg></span>
    <span class="tk run act"><svg><use href="#t-isim"/></svg></span>
    <div class="tray">
      <svg><use href="#s-tv"/></svg><svg><use href="#s-ad"/></svg><svg><use href="#s-wv"/></svg><svg><use href="#s-bear"/></svg><svg><use href="#s-nv"/></svg><svg><use href="#s-usb"/></svg>
      <svg class="tr-net"><use href="#s-net"/></svg>
      <svg class="tr-pulse"><use href="#s-pulse"/></svg><svg class="tr-gear"><use href="#s-gear"/></svg>
      <div class="clock"><div>7:26 PM</div><div>4/29/2019</div></div>
      <svg class="tr-note"><use href="#s-note"/></svg>
    </div>
  </footer>
</div>
<script src="app.js"></script>
</body>
</html>
```
FILE: styles.css
```css
* { box-sizing: border-box; }
html, body { margin: 0; padding: 0; }
body { width: 1920px; height: 1080px; overflow: hidden; background: #f0f0f0; font: 12px Roboto, "Liberation Sans", sans-serif; color: #111; }
i { font-style: normal; }
.defs { position: absolute; }
.q { font: bold 12px "Liberation Sans", sans-serif; fill: #1c2c3c; }
.app { display: flex; flex-direction: column; width: 1920px; height: 1080px; }
.spacer { flex: 1; }

/* title */
.titlebar { height: 23px; background: #fff; display: flex; align-items: center; flex: none; }
.title-icon { width: 17px; height: 17px; margin: 0 6px 0 1px; }
.title-text { font-size: 11.800px; color: #222; }
.winctl { margin-left: auto; display: flex; padding-right: 2px; }
.winbtn { width: 46px; height: 20px; display: flex; align-items: center; justify-content: center; margin-top: -3px; }
.winbtn svg { width: 10px; height: 10px; }

/* menu */
.menubar { height: 23px; background: #efefef; border-bottom: 1px solid #aaa; display: flex; align-items: center; flex: none; position: relative; }
.menu-icon { width: 16px; height: 16px; margin-right: 8px; }
.menu-item { font-size: 12px; color: #222; margin-right: 16.500px; }
.mdictl { margin-left: auto; display: flex; gap: 3px; padding-right: 2px; }
.mdibtn { width: 15px; height: 17px; background: #fbfbfb; display: flex; align-items: center; justify-content: center; }
.mdibtn svg { width: 11px; height: 11px; }

/* toolbar */
.toolbar { height: 28px; background: #f0f0f0; border-bottom: 2px solid #aaa; border-top: 1px solid #fff; display: flex; align-items: center; padding-left: 9px; flex: none; }
.tb { width: 16px; height: 16px; margin: 0 3.500px; flex: none; }
.sep { width: 6px; height: 20px; flex: none; background: linear-gradient(#999, #999) center / 1px 100% no-repeat; }
.grip { width: 12px; height: 24px; flex: none; background: repeating-linear-gradient(#bbb 0 1px, transparent 1px 3px) 5px 0 / 2px 100% no-repeat; }
.combo { width: 59px; height: 20px; border: 1px solid #bbb; background: #fff; display: flex; flex: none; }
.combo-val { flex: 1; font-size: 11.500px; padding: 2px 0 0 5px; white-space: nowrap; }
.combo-btn { width: 16px; background: #c8c8c8; border: 1px solid #999; display: flex; align-items: center; justify-content: center; flex: none; }
.combo-btn svg { width: 10px; height: 6px; }
.relaunch { width: 74px; height: 21px; margin-left: 2px; background: #dcdcdc; border: 1px solid #b0b0b0; display: flex; align-items: center; gap: 3px; padding-left: 4px; flex: none; font-size: 11.500px; color: #333; white-space: nowrap; }
.rl-ic { width: 14px; height: 14px; flex: none; }

/* workspace */
.workspace { height: 776px; display: flex; flex: none; }
.col-inst { width: 122px; flex: none; padding: 2px 0 7px; display: flex; flex-direction: column; }
.col-obj { width: 81px; margin-left: 3px; flex: none; padding: 2px 0 7px; display: flex; flex-direction: column; }
.col-doc { width: 1709px; margin-left: 5px; flex: none; display: flex; flex-direction: column; }

.dock-head { height: 18px; background: #f4f4f4; border: 1px solid #c4c4c4; display: flex; align-items: center; flex: none; }
.dock-title { padding-left: 2px; font-size: 12px; color: #222; }
.dock-ctl, .con-ctl { margin-left: auto; display: flex; align-items: center; gap: 6.500px; padding-right: 3px; }
.dock-ctl b, .con-ctl b { font-size: 11px; font-weight: 700; font-family: "DejaVu Sans", sans-serif; line-height: 1; color: #111; }
.dock-ctl .c-x, .con-ctl .c-x { font-size: 9px; }
.c-max { width: 9px; height: 9px; border: 1px solid #111; border-top-width: 2px; }
.c-rest { width: 8px; height: 8px; margin-top: 2px; border: 1px solid #111; box-shadow: 2px -2px 0 -1px #111; }

.mini-tools { height: 25px; margin-top: 2px; display: flex; align-items: center; padding-left: 2px; background: #f6f6f6; flex: none; }
.hl-group { display: flex; background: #a9d3f5; height: 24px; border: 1px solid #9ccbf0; align-items: center; }
.hl-group svg { width: 16px; height: 16px; margin: 0 3px; }
.chev { margin-left: auto; margin-right: 3px; font-size: 14px; font-weight: 700; color: #222; line-height: 1; }

.tree-box { flex: 1; margin-top: 4px; background: #fff; border: 1px solid #aaa; border-left: 0; display: flex; flex-direction: column; overflow: hidden; }
.tree-head { height: 26px; padding: 6px 0 0 12px; white-space: nowrap; overflow: hidden; font-size: 12px; color: #222; flex: none; }
.tree-row { height: 16px; display: flex; align-items: center; white-space: nowrap; overflow: hidden; flex: none; margin-right: 1px; font-size: 11.500px; color: #222; }
.tree-row svg { width: 14px; height: 14px; flex: none; margin-right: 5px; }
.tree-row.alt { background: #e8e8e8; }
.tree-row.strong span { font-weight: 700; }
.tree-row.lvl0 { padding-left: 8px; }
.tree-row.lvl1 { padding-left: 28px; }
.tree-row.lvl0 svg { margin-left: 12.500px; }
.tree-row.lvl1 svg { margin-left: 13px; }
.tri { width: 0; height: 0; flex: none; }
.tri { border-left: 6px solid #e4e4e4; border-top: 4px solid transparent; border-bottom: 4px solid transparent; filter: drop-shadow(0 0 .5px #555); }
.tri.open { border-top: 6px solid #e4e4e4; border-left: 4px solid transparent; border-right: 4px solid transparent; border-bottom: 0; }
.tri.none { border: 0; width: 6px; filter: none; }

.hscroll { height: 18px; background: #f0f0f0; display: flex; align-items: center; flex: none; position: relative; }
.arr { width: 18px; text-align: center; font: 700 13px "DejaVu Sans", sans-serif; color: #333; flex: none; line-height: 1; }
.arr.end { margin-left: auto; }
.thumb { background: #cbcbcb; height: 100%; display: block; }
.t-inst { width: 25px; }
.t-obj { width: 9px; }
.t-names { width: 54px; margin-left: -3px; display: flex; align-items: center; justify-content: center; }
.t-names i { width: 10px; height: 12px; background: #f4f4f4; }
.t-vals { width: 24px; }
.t-wave { width: 9px; margin-left: -6px; }
.dark-free { height: 20px; }
.wave-scroll { height: 20px; padding-left: 0; }
.wave-scroll .arr:first-child { margin-left: -3px; }

.dock-tabs { height: 23px; display: flex; align-items: flex-start; flex: none; }
.dtab { width: 73px; height: 23px; background: #fff; display: flex; align-items: center; padding-left: 8px; font-size: 12px; color: #222; white-space: nowrap; }
.dtab svg { width: 14px; height: 14px; margin-right: 2px; flex: none; }
.dtab-ic { width: 12px; height: 18px; margin: 1px -3px 0 7px; flex: none; }
.dtab-nav { width: 14px; height: 20px; background: #c8c8c8; margin-left: 1px; position: relative; flex: none; }
.dtab-nav .tl, .dtab-nav .tr { position: absolute; top: 4px; left: 4px; border-top: 6px solid transparent; border-bottom: 6px solid transparent; }
.dtab-nav .tl { border-right: 5px solid #999; }
.dtab-nav .tr { border-left: 5px solid #111; }

.obj-title { height: 21px; flex: none; padding: 3px 0 0 5px; white-space: nowrap; color: #222; font-size: 12px; }
.obj-tools { margin-top: 0; height: 22px; }
.obj-tools .hl-group { height: 21px; }
.obj-box { flex: 1; margin-top: 7px; background: #fff; border: 1px solid #aaa; display: flex; flex-direction: column; overflow: hidden; }
.obj-head { height: 23px; padding: 5px 0 0 11px; white-space: nowrap; overflow: hidden; font-size: 12px; color: #222; flex: none; }
.obj-row { height: 16px; margin: 0 1px; display: flex; align-items: center; padding-left: 23px; flex: none; white-space: nowrap; overflow: hidden; font-style: italic; font-size: 11.500px; color: #222; }
.obj-row svg { width: 15px; height: 15px; margin-right: 6px; flex: none; }
.obj-row.alt { background: #e8e8e8; }

/* doc */
.doc-main { display: flex; height: 748px; flex: none; }
.side-tools { width: 26px; background: #ececec; display: flex; flex-direction: column; align-items: center; flex: none; padding: 3px 2px 0 0; }
.st { width: 17px; height: 17px; margin: 2.500px 0; flex: none; }
.st-sep { width: 22px; height: 1px; background: #999; margin: 2px 0; flex: none; }
.st-on { width: 24px; height: 22px; background: #b5daf7; border: 1px solid #9ccbf0; display: flex; align-items: center; justify-content: center; flex: none; }
.st-on .st { margin: 0; }

.sig-col { display: flex; flex-direction: column; flex: none; }
.names { width: 95px; margin-right: 4px; }
.values { width: 66px; margin-right: 5px; }
.sig-black { height: 728px; background: #000; display: flex; flex-direction: column; color: #dfe6e6; }
.sig-top { height: 33px; flex: none; }
.sig-head { height: 25px; background: #fff; border-top: 3px solid #8a8a8a; color: #10203a; font-weight: 700; font-size: 12.500px; padding: 3px 0 0 8px; margin: 0 1px; flex: none; box-shadow: -1px -3px 0 0 #8a8a8a, 1px -3px 0 0 #8a8a8a; }
.sig-row { height: 20px; display: flex; align-items: center; padding-left: 25px; flex: none; font-size: 12px; white-space: nowrap; overflow: hidden; }
.sig-row svg { width: 16px; height: 16px; margin-right: 6px; flex: none; }
.sig-row.sel { background: #e8e8e8; color: #222; margin-left: 22px; padding-left: 3px; margin-right: 1px; }
.val-row { height: 20px; padding-left: 5px; font: 11.500px/20px "DejaVu Sans Mono", monospace; white-space: pre; overflow: hidden; flex: none; }
.val-row.sel { background: #e8e8e8; color: #222; margin: 0 1px; padding-left: 4px; }
.sig-foot { height: 38px; border-top: 2px solid #8a8a8a; flex: none; }

.wave-col { width: 1494px; flex: none; display: flex; flex-direction: column; }
.wave { height: 728px; background: #000; position: relative; overflow: hidden; }
.wave-svg, .callout { position: absolute; left: 0; top: 0; display: block; }
.vscroll { width: 19px; display: flex; flex-direction: column; align-items: center; flex: none; color: #bbb; }
.arr-up, .arr-dn { font-size: 11px; line-height: 16px; height: 16px; color: #999; flex: none; }
.vscroll .arr-dn { margin-bottom: 4px; }

.tick { stroke: #fff; }
.major { stroke: #aaa; }
.ruler-t { fill: #fff; font: 11px "Liberation Sans", sans-serif; }
.ruler-b { fill: #111; font: 11px "Liberation Sans", sans-serif; }
.tick-b { stroke: #111; }
.ruler-line { stroke: #fff; stroke-width: 1.500; }
.ybar { fill: #e2d000; }
.low { stroke: #1fe01f; fill: none; }
.clk-l { stroke: #00f000; stroke-width: 2; fill: none; }
.high { fill: #043f04; }
.red { stroke: #f00; stroke-width: 1; }
.red-f { fill: #400000; }
.bus { stroke: #1fe01f; fill: none; }
.bus-t { fill: #eef2ee; font: 11px "Liberation Sans", sans-serif; text-anchor: middle; }
.cur0 { stroke: #ff0; stroke-width: 2; stroke-dasharray: 3 2; }
.cur1 { stroke: #ff0; stroke-width: 3; }
.flag { fill: #ff0; }
.flag-t { fill: #111; font: 11px "Liberation Sans", sans-serif; }

.note { position: absolute; color: #fff; font: 500 18.650px/22.500px Roboto, sans-serif; white-space: nowrap; }
.n-sensor { left: 623px; top: 17px; }
.n-main { left: 302px; top: 124px; }
.n-case { left: 23px; top: 398px; }
.mark-box { position: absolute; left: 218px; top: 98px; width: 71px; height: 132px; border: 4px solid #fff; }
.arrow-shaft { stroke: #fff; stroke-width: 6; fill: none; }
.arrow-head { fill: #fff; }
.pills { position: absolute; left: 4px; top: 704px; display: flex; gap: 8px; }
.pill { height: 20px; background: #fff; border-radius: 4px; color: #222; font-size: 11.500px; line-height: 20px; text-align: center; }
.p1 { width: 81px; }
.p2 { width: 69px; }
.p3 { width: 83px; }

.doc-tabs { height: 21px; display: flex; flex: none; }
.doc-tab { display: flex; align-items: center; position: relative; flex: none; }
.doc-tab svg { width: 16px; height: 16px; margin-left: 4px; flex: none; }
.doc-tab.active { width: 568px; background: #f4f4f4; border-top: 1px solid #ccc; border-bottom: 2px solid #0a6fd0; }
.doc-tab.other { width: 568px; margin-left: 1px; background: linear-gradient(#f0f0f0, #c4c4c4); border-bottom: 1px solid #999; border-right: 1px solid #999; border-radius: 0 0 3px 0; }
.doc-label { flex: 1; text-align: center; font-size: 12px; color: #222; }
.other .doc-label { font-size: 11.500px; }
.close { width: 13px; height: 14px; margin-right: 7px; text-align: center; font: 700 10px/13px "DejaVu Sans", sans-serif; color: #fff; border-radius: 2px; flex: none; }
.close.red { background: #e8462e; border: 1px solid #b03a20; }
.close.gray { background: #b4b4b4; border: 1px solid #8f8f8f; }
.gripper { height: 7px; margin: 3px 0 0 429px; width: 636px; background: repeating-linear-gradient(90deg, #ccc 0 1px, transparent 1px 3px) 0 0 / 100% 2px no-repeat; flex: none; }

/* console */
.console { height: 160px; flex: none; display: flex; flex-direction: column; }
.con-head { height: 17px; background: #f0f0f0; border-top: 1px solid #aaa; border-bottom: 1px solid #aaa; display: flex; align-items: center; padding-left: 3px; font-size: 11.500px; color: #222; flex: none; }
.con-body { height: 116px; margin-top: 4px; background: #fff; border-top: 1px solid #aaa; border-bottom: 2px solid #999; display: flex; flex: none; }
.con-lines { flex: 1; padding: 2px 0 0 4px; font: 10.800px/14px "Liberation Sans", sans-serif; color: #222; white-space: nowrap; overflow: hidden; }
.prompt { font: 700 10.300px/14px "DejaVu Sans", sans-serif; color: #111; }
.link { color: #0000ee; text-decoration: underline; }
.con-scroll { width: 16px; background: #f0f0f0; display: flex; flex-direction: column; align-items: center; flex: none; }
.con-thumb { width: 100%; height: 42px; background: #c8c8c8; display: flex; justify-content: center; padding-top: 12px; flex: none; }
.con-thumb i { width: 9px; height: 10px; background: #eee; }
.con-tabs { height: 23px; display: flex; align-items: stretch; flex: none; }
.con-tab { display: flex; align-items: center; font-size: 10.700px; color: #222; white-space: nowrap; border-bottom: 1px solid #ddd; border-right: 1px solid #e4e4e4; flex: none; padding-left: 6px; }
.con-tab svg { width: 15px; height: 15px; flex: none; margin-right: 10px; }
.con-tab.on { width: 81px; background: #fff; }
.con-tab.t2 { width: 117px; }
.con-tab.t3 { width: 98px; }
.con-tab.t4 { width: 135px; }
.con-tab.t5 { width: 110px; }
.bp { width: 11px; height: 14px; border-radius: 50%; background: #c80000; margin: 0 12px 0 0; }

.status { height: 30px; flex: none; display: flex; justify-content: flex-end; align-items: flex-end; padding: 0 2px 3px 0; }
.simtime { width: 152px; height: 23px; border: 1px solid #aaa; border-bottom: 0; background: #f8f8f8; padding-left: 3px; font-size: 11.500px; line-height: 22px; color: #222; white-space: nowrap; }

/* taskbar */
.taskbar { height: 40px; background: #0c0c0c; display: flex; align-items: stretch; flex: none; }
.tk { width: 49px; display: flex; align-items: center; justify-content: center; border-bottom: 2px solid transparent; flex: none; }
.tk svg { width: 25px; height: 25px; }
.tk svg.sm { width: 16px; height: 16px; }
.tk.k1 { width: 48px; }
.tk.run { position: relative; }
.tk.run::after { content: ""; position: absolute; left: 4px; right: 4px; bottom: -2px; height: 2px; background: #76b9ed; }
.tk.act { background: #333; }
.tk.act::after { left: 0; right: 0; }
.tray { margin-left: auto; display: flex; align-items: center; padding-right: 25px; color: #fff; }
.tray svg { width: 16px; height: 16px; margin: 0 4px; flex: none; }
.tray .tr-net { margin-left: 27px; }
.tray .tr-pulse { margin-left: 27px; }
.tray .tr-gear { margin-left: 4px; }
.tray .tr-note { margin-left: 13px; margin-right: 0; }
.clock { width: 62px; margin-left: 1px; text-align: center; font-size: 12px; line-height: 17px; color: #ddd; }
```
FILE: app.js
```js
(function () {
  var X0 = 409, TICK = 29.8;
  var o = [];
  function line(c, x1, y1, x2, y2) { o.push('<line class="' + c + '" x1="' + x1 + '" y1="' + y1 + '" x2="' + x2 + '" y2="' + y2 + '"/>'); }
  function rect(c, x, y, w, h) { o.push('<rect class="' + c + '" x="' + x + '" y="' + y + '" width="' + w + '" height="' + h + '"/>'); }
  function text(c, x, y, s) { o.push('<text class="' + c + '" x="' + x + '" y="' + y + '">' + s + '</text>'); }
  function path(c, d) { o.push('<path class="' + c + '" d="' + d + '"/>'); }

  // bottom ruler background
  rect('ybar', 408, 743, 1492, 19);

  // grid + ruler labels
  for (var g = 0; g < 10; g++) {
    var gx = Math.round(X0 + g * 149) + 0.5;
    if (g > 0) line('major', gx, 115, gx, 743);
    text('ruler-t', gx + 1.5, 123, (g * 50) + ' ns');
    line('tick-b', gx, 743, gx, 762);
    text('ruler-b', gx + 1.5, 754, (g * 50) + ' ns');
  }
  for (var t = 1; t < 50; t++) {
    if (t % 5 === 0) continue;
    var tx = Math.round(X0 + t * TICK) + 0.5;
    line('tick', tx, 127, tx, 131);
    line('tick-b', tx, 758, tx, 762);
  }
  line('ruler-line', 408, 131.5, 1898, 131.5);
  line('ruler-line', 408, 743, 1900, 743);
  line('ruler-line', 408, 762, 1900, 762);

  // sns
  rect('red-f', 409, 142, 1489, 8);
  line('red', 409, 142.5, 1898, 142.5);

  // flat low signals
  [169, 189, 249, 309, 329, 349].forEach(function (y) { line('low', 409, y + .5, 1898, y + .5); });

  // clk
  var d = 'M409 209';
  for (var k = 0; ; k++) {
    var a = Math.round(423 + k * TICK), b = Math.round(423 + k * TICK + 15);
    if (a >= 1898) break;
    d += 'H' + a + 'V195H' + Math.min(b, 1898) + 'V209';
    rect('high', a, 195, Math.min(b, 1898) - a, 14);
  }
  path('clk-l', d + 'H1898');

  // mr, mg, sr
  rect('high', 409, 215, 253, 14);
  path('low', 'M409 215.500H662.500V229.500H1898');
  rect('high', 662, 255, 1236, 14);
  path('low', 'M409 269.500H662.500V255.500H1898');
  rect('high', 409, 275, 1489, 14);
  line('low', 409, 275.5, 1898, 275.5);

  // buses: two rails that swap at every value change, forming the hexagon shape
  function bus(top, bot, xs) {
    var m = (top + bot) / 2, p = top, q = bot;
    var up = 'M409 ' + m + 'L412 ' + top, dn = 'M409 ' + m + 'L412 ' + bot;
    xs.forEach(function (x) {
      var r = p; p = q; q = r;
      up += 'H' + (x - 3) + 'L' + (x + 3) + ' ' + p;
      dn += 'H' + (x - 3) + 'L' + (x + 3) + ' ' + q;
    });
    path('bus', up + 'H1898');
    path('bus', dn + 'H1898');
  }
  bus(355.5, 369.5, []);
  text('bus-t', 1155, 366, '10000 ps');

  var labels = ['0','1','10','11','100','101','110','111','0','1','10','11','100','101','110','111',
    '10...','10...','10...','10...','1...','11...','11...','11...','10...','1...','10...','10...','10...','10...','1...','10...','11...',
    '11...','11...','1...','11...','11...','11...','11...','1...','10...','10...','10...','10...','1...','10...','10...','10...','10...','...'];
  var xs = [];
  for (var i = 0; i < 50; i++) xs.push(423 + i * TICK);
  bus(375.5, 389.5, xs);
  labels.forEach(function (s, i) {
    var l = i === 0 ? 409 : xs[i - 1], r = i < xs.length ? xs[i] : 1898;
    text('bus-t', (l + r) / 2, 386, s);
  });

  bus(395.5, 409.5, [662]);
  text('bus-t', 535, 406, 'allredfirst');
  text('bus-t', 1280, 406, 'maingreen');
  bus(415.5, 429.5, [632]);
  text('bus-t', 520, 426, 'allredfirst');
  text('bus-t', 1265, 426, 'maingreen');

  // cursors and flags
  line('cur0', 409.5, 90, 409.5, 762);
  line('cur1', 1898.5, 90, 1898.5, 762);
  rect('flag', 408, 75, 46, 15);
  text('flag-t', 410, 86, '0.000 ns');
  rect('flag', 1841, 75, 58, 15);
  text('flag-t', 1843, 86, '500.000 ns');
  rect('flag', 1841, 727, 58, 15);
  text('flag-t', 1843, 738, '500.000 ns');

  document.getElementById('wave-svg').innerHTML = o.join('');
})();
```
